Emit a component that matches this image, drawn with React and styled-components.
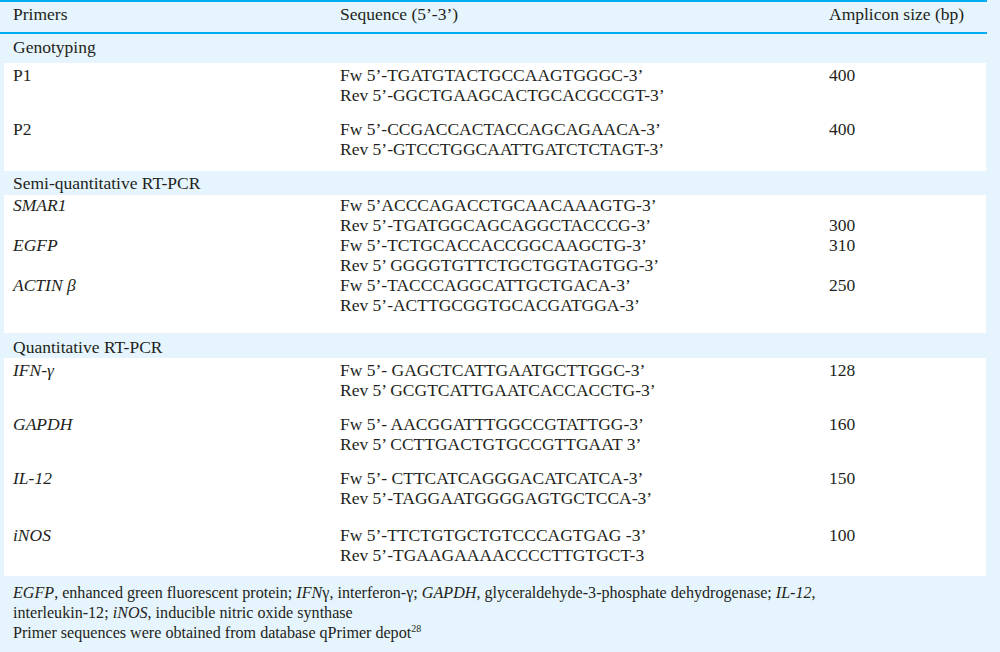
import React from 'react'
import styled, { createGlobalStyle } from 'styled-components'

const GlobalStyle = createGlobalStyle`
  html, body {
    margin: 0;
    padding: 0;
    background: #e6f5fd;
    font-family: "Liberation Serif", serif;
    color: #231f20;
  }
`

const Table = styled.div`
  width: 987px;
  font-family: "Liberation Serif", serif;
  font-size: 17.5px;
  line-height: 20px;
`

const Head = styled.div`
  display: grid;
  grid-template-columns: 327px 489px 1fr;
  padding: 2px 0 8px 4px;
  border-top: 2px solid #00aeef;
  border-bottom: 2px solid #00aeef;
`

const Cell = styled.div`
  padding-left: 9px;
  padding-top: ${p => (p.$second ? '20px' : '0')};
  white-space: nowrap;
  font-style: ${p => (p.$italic ? 'italic' : 'normal')};
`

const Section = styled.div`
  padding: ${p => p.$top}px 0 ${p => p.$bottom}px 13px;
`

const Row = styled.div`
  display: grid;
  grid-template-columns: 327px 489px 1fr;
  margin-left: 4px;
  width: 982px;
  background: #ffffff;
  padding: ${p => p.$top}px 0 ${p => p.$bottom}px;
`

const Notes = styled.div`
  padding: 7px 0 0 13px;
  font-size: 16.1px;
  line-height: 20px;
  white-space: nowrap;
`

const Sup = styled.sup`
  font-size: 10px;
  line-height: 0;
`

const groups = [
  {
    title: 'Genotyping',
    top: 3,
    bottom: 6,
    rows: [
      { name: 'P1', fw: 'Fw 5’-TGATGTACTGCCAAGTGGGC-3’', rev: 'Rev 5’-GGCTGAAGCACTGCACGCCGT-3’', size: '400', top: 2, bottom: 12 },
      { name: 'P2', fw: 'Fw 5’-CCGACCACTACCAGCAGAACA-3’', rev: 'Rev 5’-GTCCTGGCAATTGATCTCTAGT-3’', size: '400', top: 2, bottom: 12 },
    ],
  },
  {
    title: 'Semi-quantitative RT-PCR',
    top: 2,
    bottom: 2,
    rows: [
      { name: 'SMAR1', italic: true, fw: 'Fw 5’ACCCAGACCTGCAACAAAGTG-3’', rev: 'Rev 5’-TGATGGCAGCAGGCTACCCG-3’', size: '300', second: true, top: 0, bottom: 0 },
      { name: 'EGFP', italic: true, fw: 'Fw 5’-TCTGCACCACCGGCAAGCTG-3’', rev: 'Rev 5’ GGGGTGTTCTGCTGGTAGTGG-3’', size: '310', top: 0, bottom: 0 },
      { name: 'ACTIN β', italic: true, fw: 'Fw 5’-TACCCAGGCATTGCTGACA-3’', rev: 'Rev 5’-ACTTGCGGTGCACGATGGA-3’', size: '250', top: 0, bottom: 18 },
    ],
  },
  {
    title: 'Quantitative RT-PCR',
    top: 4,
    bottom: 1,
    rows: [
      { name: 'IFN-γ', italic: true, fw: 'Fw 5’- GAGCTCATTGAATGCTTGGC-3’', rev: 'Rev 5’ GCGTCATTGAATCACCACCTG-3’', size: '128', top: 2, bottom: 12 },
      { name: 'GAPDH', italic: true, fw: 'Fw 5’- AACGGATTTGGCCGTATTGG-3’', rev: 'Rev 5’ CCTTGACTGTGCCGTTGAAT 3’', size: '160', top: 2, bottom: 12 },
      { name: 'IL-12', italic: true, fw: 'Fw 5’- CTTCATCAGGGACATCATCA-3’', rev: 'Rev 5’-TAGGAATGGGGAGTGCTCCA-3’', size: '150', top: 2, bottom: 15 },
      { name: 'iNOS', italic: true, fw: 'Fw 5’-TTCTGTGCTGTCCCAGTGAG -3’', rev: 'Rev 5’-TGAAGAAAACCCCTTGTGCT-3', size: '100', top: 2, bottom: 11 },
    ],
  },
]

const App = () => (
  <>
    <GlobalStyle />
    <Table>
      <Head>
        <Cell>Primers</Cell>
        <Cell>Sequence (5’-3’)</Cell>
        <Cell>Amplicon size (bp)</Cell>
      </Head>
      {groups.map(g => (
        <React.Fragment key={g.title}>
          <Section $top={g.top} $bottom={g.bottom}>{g.title}</Section>
          {g.rows.map(r => (
            <Row key={r.name} $top={r.top} $bottom={r.bottom}>
              <Cell $italic={r.italic}>{r.name}</Cell>
              <Cell>
                {r.fw}
                <br />
                {r.rev}
              </Cell>
              <Cell $second={r.second}>{r.size}</Cell>
            </Row>
          ))}
        </React.Fragment>
      ))}
      <Notes>
        <i>EGFP</i>, enhanced green fluorescent protein; <i>IFN</i>γ, interferon-γ; <i>GAPDH</i>, glyceraldehyde-3-phosphate dehydrogenase; <i>IL-12</i>,
        <br />
        interleukin-12; <i>iNOS</i>, inducible nitric oxide synthase
        <br />
        Primer sequences were obtained from database qPrimer depot<Sup>28</Sup>
      </Notes>
    </Table>
  </>
)

export default App
